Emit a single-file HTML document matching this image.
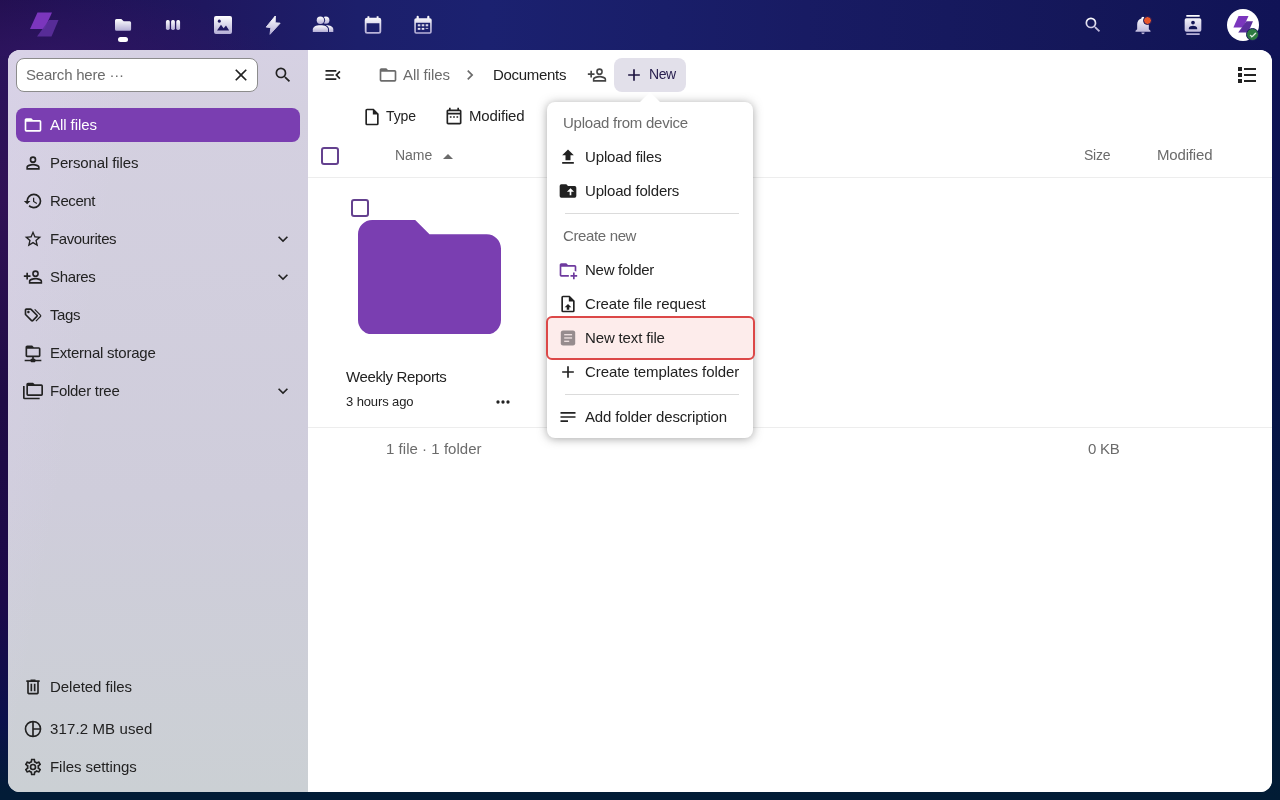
<!DOCTYPE html>
<html lang="en">
<head>
<meta charset="utf-8">
<title>Documents - Files</title>
<style>
*{box-sizing:border-box;margin:0;padding:0}
html,body{width:1280px;height:800px;overflow:hidden}
body{font-family:"Liberation Sans",sans-serif;font-size:15px;color:#222;position:relative;
background:
 radial-gradient(ellipse 240px 70px at 50px 62px, rgba(50,22,100,.85), rgba(50,22,100,0) 100%) 0 0 / 400px 56px no-repeat,
 linear-gradient(to right,#220f50 0,#211156 5%,#1f175f 16%,#1c1f6b 28%,#1b2170 38%,#191e69 52%,#181b63 63%,#141759 85%,#101356 100%) 0 0 / 1280px 56px no-repeat,
 linear-gradient(to bottom,#220f50 0,#2b145c 6%,#301155 25%,#1f0c45 50%,#1c0949 75%,#0b104b 90%,#021c37 99%) 0 0 / 24px 800px no-repeat,
 linear-gradient(to bottom,#101356 0,#09124e 38%,#01193c 75%,#021c35 100%) 1256px 0 / 24px 800px no-repeat,
 #021c36;}
.abs{position:absolute}
svg{display:block;position:absolute}
.t{position:absolute;white-space:nowrap;line-height:20px}
#content,#menu{will-change:transform}
/* header */
#header{position:absolute;left:0;top:0;width:1280px;height:50px}
#header svg.hi{width:20px;height:20px;fill:url(#hg)}
/* content */
#content{position:absolute;left:8px;top:50px;width:1264px;height:742px;border-radius:12px;overflow:hidden;background:#fff}
#nav{position:absolute;left:0;top:0;width:300px;height:742px;
 background:linear-gradient(100deg,rgba(222,212,240,.35) 0,rgba(222,212,240,0) 30%),linear-gradient(to bottom,#d6d1e3 0%,#d4d0e0 8%,#cfcddb 60%,#cbd0d4 100%)}
#main{position:absolute;left:300px;top:0;width:964px;height:742px;background:#fff}
.navi{position:absolute;left:8px;width:284px;height:34px;border-radius:8px}
.navi.active{background:#7a3eb1}
.navi .t{left:34px;top:7px;color:#222}
.navi.active .t{color:#fff}
.navi svg{left:7px;top:7px;width:20px;height:20px;fill:#222}
.navi.active svg{fill:#fff}
.navi svg.chev{left:257px;top:7px;width:20px;height:20px}
.line{position:absolute;height:1px;background:#ededed}
.cb{width:18px;height:18px;border:2px solid #64418f;border-radius:3px;background:#fff}
/* popup */
#menu{position:absolute;left:547px;top:102px;width:206px;height:336px;background:#fff;border-radius:8px;
 box-shadow:0 1px 10px rgba(77,77,77,.5)}
#menu .t{left:38px;color:#222}
#menu .cap{left:16px;color:#6b6b6b}
#menu svg{left:11px;width:20px;height:20px;fill:#222}
#menu .sep{position:absolute;left:18px;width:174px;height:1px;background:#dbdbdb}
</style>
</head>
<body>
<svg width="0" height="0" style="position:absolute"><defs><linearGradient id="hg" x1="0" y1="0" x2="0" y2="1"><stop offset="0" stop-color="#ffffff"/><stop offset="1" stop-color="#b4aed6"/></linearGradient></defs></svg>
<div id="header">
 <svg style="left:28px;top:10px;width:32px;height:28px" viewBox="28 10 32 28">
  <polygon points="37.5,12.5 52,12.5 44.5,29 30,29" fill="#7b36bd"/>
  <polygon points="49,20 58.5,20 51.5,36.5 37,36.5" fill="#5b2f9c" opacity=".92"/>
 </svg>
 <!-- files -->
 <svg class="hi" style="left:113px;top:15px" viewBox="113 15 20 20"><path d="M116.500,19H121.300L123.700,21.300H129.600A1.500,1.500 0 0,1 131.100,22.800V29.200A1.500,1.500 0 0,1 129.600,30.700H116.500A1.500,1.500 0 0,1 115,29.200V20.500A1.500,1.500 0 0,1 116.500,19Z"/></svg>
 <div class="abs" style="left:118px;top:37px;width:10px;height:5px;border-radius:2.5px;background:#fff"></div>
 <!-- deck -->
 <svg class="hi" style="left:163px;top:15px" viewBox="0 0 24 24"><rect x="3.5" y="6" width="4.6" height="12" rx="2"/><rect x="9.7" y="6" width="4.6" height="12" rx="2"/><rect x="15.9" y="6" width="4.6" height="12" rx="2"/></svg>
 <!-- photos -->
 <svg class="hi" style="left:214px;top:16px;width:18px;height:18px" viewBox="3 3 18 18"><path fill-rule="evenodd" d="M5,3H19A2,2 0 0,1 21,5V19A2,2 0 0,1 19,21H5A2,2 0 0,1 3,19V5A2,2 0 0,1 5,3ZM8.3,6.6A1.6,1.6 0 1,0 8.31,6.6ZM6,17.5L10,11.8L12.6,15.3L15,12.6L18.2,17.5Z"/></svg>
 <!-- activity -->
 <svg class="hi" style="left:263px;top:13px;width:20px;height:24px" viewBox="263 13 20 24"><path d="M275.300,16L266.200,27.100L270.900,27.600L270,34.300L280.100,23.200L275.200,22.800Z" stroke="url(#hg)" stroke-width="1" stroke-linejoin="round"/></svg>
 <!-- contacts -->
 <svg class="hi" style="left:310px;top:12px;width:26px;height:24px" viewBox="310 12 26 24"><defs><mask id="pm" maskUnits="userSpaceOnUse" x="310" y="12" width="26" height="24"><rect x="310" y="12" width="26" height="24" fill="#fff"/><circle cx="320.400" cy="20.200" r="4.700" fill="#000"/><path d="M311.800,33V29.500C311.800,26 315.500,24.200 320.400,24.200C325.300,24.200 329,26 329,29.500V33Z" fill="#000"/></mask></defs><circle cx="320.400" cy="20.200" r="3.700"/><path d="M312.800,32V29.500C312.800,26.600 316,25.200 320.400,25.200C324.800,25.200 328,26.600 328,29.500V32Z"/><g mask="url(#pm)"><circle cx="325.800" cy="20.200" r="3.600"/><path d="M326,32V25.300C330.300,25.300 333.300,26.700 333.300,29.500V32Z"/></g></svg>
 <!-- calendar -->
 <svg class="hi" style="left:362px;top:13.800px;width:22px;height:22px" viewBox="0 0 24 24"><path fill-rule="evenodd" d="M6,2.5H8V4H16V2.5H18V4H18.5A2.5,2.5 0 0,1 21,6.5V19A2.5,2.5 0 0,1 18.500,21.500H5.5A2.500,2.500 0 0,1 3,19V6.5A2.500,2.500 0 0,1 5.500,4H6ZM5,10V19A.5,.5 0 0,0 5.5,19.5H18.5A.5,.5 0 0,0 19,19V10Z"/></svg>
 <!-- calendar 2 -->
 <svg class="hi" style="left:412px;top:13.800px;width:22px;height:22px" viewBox="0 0 24 24"><path fill-rule="evenodd" d="M6.2,2A1.2,1.200 0 0,1 7.400,3.200V4.5H16.600V3.200A1.200,1.200 0 0,1 19,3.200V4.500H19.500A2,2 0 0,1 21.500,6.500V19.500A2,2 0 0,1 19.500,21.500H4.500A2,2 0 0,1 2.500,19.500V6.500A2,2 0 0,1 4.500,4.500H5V3.200A1.200,1.200 0 0,1 6.200,2ZM4.200,9.500V19.300A.5,.5 0 0,0 4.700,19.800H19.300A.5,.5 0 0,0 19.800,19.300V9.500Z"/><g><rect x="6.300" y="11.300" width="2.800" height="2.200"/><rect x="10.600" y="11.300" width="2.800" height="2.200"/><rect x="14.900" y="11.300" width="2.800" height="2.200"/><rect x="6.300" y="15.200" width="2.800" height="2.200"/><rect x="10.600" y="15.200" width="2.800" height="2.200"/><rect x="14.900" y="15.200" width="2.800" height="1"/></g></svg>
 <!-- right -->
 <svg class="hi" style="left:1083px;top:15px;width:20px;height:20px" viewBox="0 0 24 24"><path d="M9.5,3A6.5,6.5 0 0,1 16,9.5C16,11.110 15.410,12.590 14.440,13.730L14.710,14H15.500L20.500,19L19,20.500L14,15.500V14.710L13.730,14.440C12.590,15.410 11.110,16 9.500,16A6.500,6.500 0 0,1 3,9.500A6.500,6.500 0 0,1 9.500,3M9.500,5C7,5 5,7 5,9.500C5,12 7,14 9.500,14C12,14 14,12 14,9.500C14,7 12,5 9.500,5Z"/></svg>
 <svg class="hi" style="left:1133px;top:15px;width:20px;height:20px" viewBox="0 0 24 24"><path d="M21,19V20H3V19L5,17V11C5,7.900 7.030,5.170 10,4.290C10,4.190 10,4.100 10,4A2,2 0 0,1 12,2A2,2 0 0,1 14,4C14,4.100 14,4.190 14,4.290C16.970,5.170 19,7.900 19,11V17L21,19M14,21A2,2 0 0,1 12,23A2,2 0 0,1 10,21"/></svg>
 <div class="abs" style="left:1142.800px;top:15.800px;width:9.400px;height:9.400px;border-radius:50%;background:#e9562a;border:1.500px solid #15155c"></div>
 <svg class="hi" style="left:1183px;top:15px;width:20px;height:20px" viewBox="0 0 24 24"><path d="M20,0H4V2H20V0M4,24H20V22H4V24M20,4H4A2,2 0 0,0 2,6V18A2,2 0 0,0 4,20H20A2,2 0 0,0 22,18V6A2,2 0 0,0 20,4M12,6.750A2.250,2.250 0 0,1 14.250,9A2.250,2.250 0 0,1 12,11.250A2.250,2.250 0 0,1 9.750,9A2.250,2.250 0 0,1 12,6.750M17,17H7V15.500C7,13.830 10.330,13 12,13C13.670,13 17,13.830 17,15.500V17Z"/></svg>
 <div class="abs" style="left:1227px;top:9px;width:32px;height:32px;border-radius:50%;background:#fff"></div>
 <svg style="left:1231.500px;top:14.200px;width:22px;height:20px" viewBox="28 10 32 28">
  <polygon points="37.5,12.5 52,12.5 44.5,29 30,29" fill="#7b36bd"/>
  <polygon points="49,20 58.5,20 51.5,36.5 37,36.5" fill="#5b2f9c"/>
 </svg>
 <div class="abs" style="left:1246px;top:28px;width:13px;height:13px;border-radius:50%;background:#2d7b41;border:1px solid #1a1a60"></div>
 <svg style="left:1248.5px;top:30.500px;width:8px;height:8px" viewBox="0 0 24 24"><path d="M21,7L9,19L3.500,13.500L4.910,12.090L9,16.170L19.590,5.590L21,7Z" fill="#fff" stroke="#fff" stroke-width="2"/></svg>
</div>
<div id="content">
 <div id="nav">
 <div class="abs" style="left:8px;top:8px;width:242px;height:34px;border-radius:8px;background:#fff;border:1px solid #8c8c8c"></div>
 <div class="t m" style="letter-spacing:-0.208px;;left:18px;top:15px;color:#6b6b6b">Search here ···</div>
 <svg style="left:223px;top:15px;width:20px;height:20px;fill:#222" viewBox="0 0 24 24"><path d="M19,6.410L17.590,5L12,10.590L6.410,5L5,6.410L10.590,12L5,17.590L6.410,19L12,13.410L17.590,19L19,17.590L13.410,12L19,6.410Z"/></svg>
 <svg style="left:265px;top:15px;width:20px;height:20px;fill:#222" viewBox="0 0 24 24"><path d="M9.500,3A6.500,6.500 0 0,1 16,9.500C16,11.110 15.410,12.590 14.440,13.730L14.710,14H15.500L20.500,19L19,20.500L14,15.500V14.710L13.730,14.440C12.590,15.410 11.110,16 9.500,16A6.500,6.500 0 0,1 3,9.500A6.500,6.500 0 0,1 9.500,3M9.500,5C7,5 5,7 5,9.500C5,12 7,14 9.500,14C12,14 14,12 14,9.500C14,7 12,5 9.500,5Z"/></svg>
 <div class="navi active" style="top:58px"><svg viewBox="0 0 24 24"><path d="M20,18H4V8H20M20,6H12L10,4H4C2.890,4 2,4.890 2,6V18A2,2 0 0,0 4,20H20A2,2 0 0,0 22,18V8C22,6.890 21.100,6 20,6Z"/></svg><div class="t m" style="letter-spacing:-0.057px;">All files</div></div>
 <div class="navi" style="top:96px"><svg viewBox="0 0 24 24"><path d="M12,4A4,4 0 0,1 16,8A4,4 0 0,1 12,12A4,4 0 0,1 8,8A4,4 0 0,1 12,4M12,6A2,2 0 0,0 10,8A2,2 0 0,0 12,10A2,2 0 0,0 14,8A2,2 0 0,0 12,6M12,13C14.670,13 20,14.330 20,17V20H4V17C4,14.330 9.330,13 12,13M12,14.900C9.030,14.900 5.900,16.360 5.900,17V18.100H18.100V17C18.100,16.360 14.970,14.900 12,14.900Z"/></svg><div class="t m" style="letter-spacing:-0.128px;">Personal files</div></div>
 <div class="navi" style="top:134px"><svg viewBox="0 0 24 24"><path d="M13.500,8H12V13L16.280,15.540L17,14.330L13.500,12.250V8M13,3A9,9 0 0,0 4,12H1L4.960,16.030L9,12H6A7,7 0 0,1 13,5A7,7 0 0,1 20,12A7,7 0 0,1 13,19C11.070,19 9.320,18.210 8.060,16.940L6.640,18.360C8.270,20 10.500,21 13,21A9,9 0 0,0 22,12A9,9 0 0,0 13,3"/></svg><div class="t m" style="letter-spacing:-0.422px;">Recent</div></div>
 <div class="navi" style="top:172px"><svg viewBox="0 0 24 24"><path d="M12,15.390L8.240,17.660L9.230,13.380L5.910,10.500L10.290,10.130L12,6.090L13.710,10.130L18.090,10.500L14.770,13.380L15.760,17.660M22,9.240L14.810,8.630L12,2L9.190,8.630L2,9.240L7.450,13.970L5.820,21L12,17.270L18.180,21L16.540,13.970L22,9.240Z"/></svg><div class="t m" style="letter-spacing:-0.378px;">Favourites</div><svg class="chev" viewBox="0 0 24 24"><path d="M7.410,8.580L12,13.170L16.590,8.580L18,10L12,16L6,10L7.410,8.580Z"/></svg></div>
 <div class="navi" style="top:210px"><svg viewBox="0 0 24 24"><path d="M15,4A4,4 0 0,0 11,8A4,4 0 0,0 15,12A4,4 0 0,0 19,8A4,4 0 0,0 15,4M15,5.900C16.160,5.900 17.100,6.840 17.100,8C17.100,9.160 16.160,10.100 15,10.100A2.100,2.100 0 0,1 12.900,8A2.100,2.100 0 0,1 15,5.900M4,7V10H1V12H4V15H6V12H9V10H6V7H4M15,13C12.330,13 7,14.330 7,17V20H23V17C23,14.330 17.670,13 15,13M15,14.900C17.970,14.900 21.100,16.360 21.100,17V18.100H8.900V17C8.900,16.360 12,14.900 15,14.900Z"/></svg><div class="t m" style="letter-spacing:-0.339px;">Shares</div><svg class="chev" viewBox="0 0 24 24"><path d="M7.410,8.580L12,13.170L16.590,8.580L18,10L12,16L6,10L7.410,8.580Z"/></svg></div>
 <div class="navi" style="top:248px"><svg viewBox="0 0 24 24"><path d="M6.500 10C7.300 10 8 9.300 8 8.500S7.300 7 6.500 7 5 7.700 5 8.500 5.700 10 6.500 10M9 6L16 13L11 18L4 11V6H9M9 4H4C2.900 4 2 4.900 2 6V11C2 11.600 2.200 12.100 2.600 12.400L9.600 19.400C9.900 19.800 10.400 20 11 20S12.100 19.800 12.400 19.400L17.400 14.400C17.800 14 18 13.500 18 13C18 12.400 17.800 11.900 17.400 11.600L10.400 4.600C10.100 4.200 9.600 4 9 4M13.500 5.700L14.500 4.700L21.400 11.600C21.800 12 22 12.500 22 13S21.800 14.100 21.400 14.400L16 19.800L15 18.800L20.700 13L13.500 5.700Z"/></svg><div class="t m" style="letter-spacing:-0.422px;">Tags</div></div>
 <div class="navi" style="top:286px"><svg viewBox="0 0 24 24"><path d="M15 20C15 19.450 14.550 19 14 19H13V17H19C20.110 17 21 16.110 21 15V7C21 5.900 20.110 5 19 5H13L11 3H5C3.900 3 3 3.900 3 5V15C3 16.110 3.900 17 5 17H11V19H10C9.450 19 9 19.450 9 20H2V22H9C9 22.550 9.450 23 10 23H14C14.550 23 15 22.550 15 22H22V20H15M5 15V7H19V15H5Z"/></svg><div class="t m" style="letter-spacing:-0.233px;">External storage</div></div>
 <div class="navi" style="top:324px"><svg viewBox="0 0 24 24"><path d="M22,4A2,2 0 0,1 24,6V16A2,2 0 0,1 22,18H6A2,2 0 0,1 4,16V4A2,2 0 0,1 6,2H12L14,4H22M2,6V20H20V22H2A2,2 0 0,1 0,20V11H0V6H2M6,6V16H22V6H6Z"/></svg><div class="t m" style="letter-spacing:-0.277px;">Folder tree</div><svg class="chev" viewBox="0 0 24 24"><path d="M7.410,8.580L12,13.170L16.590,8.580L18,10L12,16L6,10L7.410,8.580Z"/></svg></div>
 <div class="navi" style="top:620px"><svg viewBox="0 0 24 24"><path d="M9,3V4H4V6H5V19A2,2 0 0,0 7,21H17A2,2 0 0,0 19,19V6H20V4H15V3H9M7,6H17V19H7V6M9,8V17H11V8H9M13,8V17H15V8H13Z"/></svg><div class="t m" style="letter-spacing:-0.042px;">Deleted files</div></div>
 <div class="navi" style="top:662px"><svg viewBox="0 0 24 24"><path d="M12,2A10,10 0 1,0 12,22A10,10 0 1,0 12,2ZM11,4.060V19.940A8,8 0 0,1 11,4.060ZM13,4.060A8,8 0 0,1 19.940,11H13ZM13,13H19.940A8,8 0 0,1 13,19.940Z"/></svg><div class="t m" style="letter-spacing:0.123px;">317.2 MB used</div></div>
 <div class="navi" style="top:700px"><svg viewBox="0 0 24 24"><path d="M12,8A4,4 0 0,1 16,12A4,4 0 0,1 12,16A4,4 0 0,1 8,12A4,4 0 0,1 12,8M12,10A2,2 0 0,0 10,12A2,2 0 0,0 12,14A2,2 0 0,0 14,12A2,2 0 0,0 12,10M10,22C9.750,22 9.540,21.820 9.500,21.580L9.130,18.930C8.500,18.680 7.960,18.340 7.440,17.940L4.950,18.950C4.730,19.030 4.460,18.950 4.340,18.730L2.340,15.270C2.210,15.050 2.270,14.780 2.460,14.630L4.570,12.970L4.500,12L4.570,11L2.460,9.370C2.270,9.220 2.210,8.950 2.340,8.730L4.340,5.270C4.460,5.050 4.730,4.960 4.950,5.050L7.440,6.050C7.960,5.660 8.500,5.320 9.130,5.070L9.500,2.420C9.540,2.180 9.750,2 10,2H14C14.250,2 14.460,2.180 14.500,2.420L14.870,5.070C15.500,5.320 16.040,5.660 16.560,6.050L19.050,5.050C19.270,4.960 19.540,5.050 19.660,5.270L21.660,8.730C21.790,8.950 21.730,9.220 21.540,9.370L19.430,11L19.500,12L19.430,13L21.540,14.630C21.730,14.780 21.790,15.050 21.660,15.270L19.660,18.730C19.540,18.950 19.270,19.040 19.050,18.950L16.560,17.950C16.040,18.340 15.500,18.680 14.870,18.930L14.500,21.580C14.460,21.820 14.250,22 14,22H10M11.250,4L10.880,6.610C9.680,6.860 8.620,7.500 7.850,8.390L5.440,7.350L4.690,8.650L6.800,10.200C6.400,11.370 6.400,12.640 6.800,13.800L4.680,15.360L5.430,16.660L7.860,15.620C8.630,16.500 9.680,17.140 10.870,17.380L11.240,20H12.760L13.130,17.390C14.320,17.140 15.370,16.500 16.140,15.620L18.570,16.660L19.320,15.360L17.200,13.810C17.600,12.640 17.600,11.370 17.200,10.200L19.310,8.650L18.560,7.350L16.150,8.390C15.380,7.500 14.320,6.860 13.120,6.620L12.750,4H11.250Z"/></svg><div class="t m" style="letter-spacing:-0.057px;">Files settings</div></div>
</div>
 <div id="main">
 <svg style="left:15px;top:15px;width:20px;height:20px;fill:#222" viewBox="0 0 24 24"><path d="M21,15.610L19.590,17L14.580,12L19.590,7L21,8.390L17.440,12L21,15.610M3,6H16V8H3V6M3,13V11H13V13H3M3,18V16H16V18H3Z"/></svg>
 <svg style="left:70px;top:15px;width:20px;height:20px;fill:#6b6b6b" viewBox="0 0 24 24"><path d="M20,18H4V8H20M20,6H12L10,4H4C2.890,4 2,4.890 2,6V18A2,2 0 0,0 4,20H20A2,2 0 0,0 22,18V8C22,6.890 21.100,6 20,6Z"/></svg>
 <div class="t m" style="letter-spacing:-0.068px;;left:95px;top:15px;color:#6b6b6b">All files</div>
 <svg style="left:152px;top:15px;width:20px;height:20px;fill:#6b6b6b" viewBox="0 0 24 24"><path d="M8.590,16.580L13.170,12L8.590,7.410L10,6L16,12L10,18L8.590,16.580Z"/></svg>
 <div class="t m" style="letter-spacing:-0.308px;;left:185px;top:15px;color:#222">Documents</div>
 <svg style="left:279px;top:15px;width:20px;height:20px;fill:#444" viewBox="0 0 24 24"><path d="M15,4A4,4 0 0,0 11,8A4,4 0 0,0 15,12A4,4 0 0,0 19,8A4,4 0 0,0 15,4M15,5.900C16.160,5.900 17.100,6.840 17.100,8C17.100,9.160 16.160,10.100 15,10.100A2.100,2.100 0 0,1 12.900,8A2.100,2.100 0 0,1 15,5.900M4,7V10H1V12H4V15H6V12H9V10H6V7H4M15,13C12.330,13 7,14.330 7,17V20H23V17C23,14.330 17.670,13 15,13M15,14.900C17.970,14.900 21.100,16.360 21.100,17V18.100H8.900V17C8.900,16.360 12,14.900 15,14.900Z"/></svg>
 <div class="abs" style="left:306px;top:8px;width:72px;height:34px;border-radius:8px;background:#e2e0ea"></div>
 <svg style="left:316px;top:15px;width:20px;height:20px;fill:#1e1440" viewBox="0 0 24 24"><path d="M19,13H13V19H11V13H5V11H11V5H13V11H19V13Z"/></svg>
 <div class="t m" style="letter-spacing:-0.472px;;left:341px;top:14px;color:#2a2050;font-size:14px">New</div>
 <svg style="left:927px;top:13px;width:24px;height:24px;fill:#222" viewBox="0 0 24 24"><path d="M3,4H7V8H3V4M9,5V7H21V5H9M3,10H7V14H3V10M9,11V13H21V11H9M3,16H7V20H3V16M9,17V19H21V17H9"/></svg>
 <svg style="left:54px;top:57px;width:20px;height:20px;fill:#222" viewBox="0 0 24 24"><path d="M14,2H6A2,2 0 0,0 4,4V20A2,2 0 0,0 6,22H18A2,2 0 0,0 20,20V8L14,2M18,20H6V4H13V9H18V20Z"/></svg>
 <div class="t m" style="letter-spacing:-0.090px;;left:78px;top:56px;color:#222;font-size:14px">Type</div>
 <svg style="left:136px;top:57px;width:20px;height:20px;fill:#222" viewBox="0 0 24 24"><path d="M7 11H9V13H7V11M21 5V19C21 20.110 20.110 21 19 21H5C3.890 21 3 20.100 3 19V5C3 3.900 3.900 3 5 3H6V1H8V3H16V1H18V3H19C20.110 3 21 3.900 21 5M5 7H19V5H5V7M19 19V9H5V19H19M15 13V11H17V13H15M11 13V11H13V13H11Z"/></svg>
 <div class="t m" style="letter-spacing:-0.150px;;left:161px;top:56px;color:#222">Modified</div>
 <div class="abs cb" style="left:13px;top:97px"></div>
 <div class="t m" style="letter-spacing:-0.040px;;left:87px;top:95px;color:#6b6b6b;font-size:14px">Name</div>
 <svg style="left:128px;top:94px;width:24px;height:24px;fill:#6b6b6b" viewBox="0 0 24 24"><path d="M7,15L12,10L17,15H7Z"/></svg>
 <div class="t m" style="letter-spacing:-0.234px;;left:776px;top:95px;color:#6b6b6b;font-size:14px">Size</div>
 <div class="t m" style="letter-spacing:-0.163px;;left:849px;top:95px;color:#6b6b6b">Modified</div>
 <div class="line" style="left:0;top:127px;width:964px"></div>
 <div class="abs cb" style="left:43.400px;top:149.400px"></div>
 <svg style="left:49.500px;top:170px;width:143px;height:114.400px" viewBox="2 4 20 16"><path d="M10,4H4C2.890,4 2,4.890 2,6V18A2,2 0 0,0 4,20H20A2,2 0 0,0 22,18V8C22,6.890 21.100,6 20,6H12L10,4Z" fill="#7a3eb1"/></svg>
 <div class="t m" style="letter-spacing:-0.364px;;left:38px;top:317px;color:#222">Weekly Reports</div>
 <div class="t m" style="letter-spacing:-0.107px;;left:38px;top:342px;color:#222;font-size:13px">3 hours ago</div>
 <svg style="left:185px;top:342px;width:20px;height:20px;fill:#222" viewBox="0 0 24 24"><path d="M16,12A2,2 0 0,1 18,10A2,2 0 0,1 20,12A2,2 0 0,1 18,14A2,2 0 0,1 16,12M10,12A2,2 0 0,1 12,10A2,2 0 0,1 14,12A2,2 0 0,1 12,14A2,2 0 0,1 10,12M4,12A2,2 0 0,1 6,10A2,2 0 0,1 8,12A2,2 0 0,1 6,14A2,2 0 0,1 4,12Z"/></svg>
 <div class="line" style="left:0;top:377px;width:964px"></div>
 <div class="t m" style="letter-spacing:0.033px;;left:78px;top:389px;color:#6b6b6b">1 file · 1 folder</div>
 <div class="t m" style="letter-spacing:-0.258px;;left:780px;top:389px;color:#6b6b6b">0 KB</div>
</div>
</div>
<div id="menu">
 <div class="abs" style="left:93px;top:-10px;width:0;height:0;border-left:10px solid transparent;border-right:10px solid transparent;border-bottom:10px solid #fff"></div>
 <div class="t m cap" style="letter-spacing:-0.241px;;top:11px">Upload from device</div>
 <svg style="top:45px;fill:#222" viewBox="0 0 24 24"><path d="M9,16V10H5L12,3L19,10H15V16H9M5,20V18H19V20H5Z"/></svg><div class="t m" style="letter-spacing:-0.149px;;top:45px">Upload files</div>
 <svg style="top:79px;fill:#222" viewBox="0 0 24 24"><path d="M20,6A2,2 0 0,1 22,8V18A2,2 0 0,1 20,20H4A2,2 0 0,1 2,18V6A2,2 0 0,1 4,4H10L12,6H20M10.750,13H14V17H16V13H19.250L15,8.750"/></svg><div class="t m" style="letter-spacing:-0.181px;;top:79px">Upload folders</div>
 <div class="sep" style="top:111px"></div>
 <div class="t m cap" style="letter-spacing:-0.362px;;top:124px">Create new</div>
 <svg style="top:158px;fill:#6e3a9e" viewBox="0 0 24 24"><path d="M13 19C13 19.340 13.040 19.670 13.090 20H4C2.900 20 2 19.110 2 18V6C2 4.890 2.890 4 4 4H10L12 6H20C21.100 6 22 6.890 22 8V13.810C21.390 13.460 20.720 13.220 20 13.090V8H4V18H13.090C13.040 18.330 13 18.660 13 19M20 18V15H18V18H15V20H18V23H20V20H23V18H20Z"/></svg><div class="t m" style="letter-spacing:-0.270px;;top:158px">New folder</div>
 <svg style="top:192px;fill:#222" viewBox="0 0 24 24"><path d="M14,2L20,8V20A2,2 0 0,1 18,22H6A2,2 0 0,1 4,20V4A2,2 0 0,1 6,2H14M18,20V9H13V4H6V20H18M12,12L16,16H13.500V19H10.500V16H8L12,12Z"/></svg><div class="t m" style="letter-spacing:-0.104px;;top:192px">Create file request</div>
 <div class="abs" style="left:-1.500px;top:213.500px;width:209px;height:44.500px;border:2.600px solid #dc4848;border-radius:6px;background:#fdeceb"></div>
 <svg style="left:13px;top:228px;width:16px;height:16px" viewBox="0 0 16 16"><rect x=".8" y=".4" width="14.400" height="15" rx="2.200" fill="#968c8e"/><rect x="4.200" y="4.100" width="7.900" height="1.250" fill="#f6e8e8"/><rect x="4.200" y="7.350" width="7.900" height="1.250" fill="#f6e8e8"/><rect x="4.200" y="10.650" width="5" height="1.250" fill="#f6e8e8"/></svg><div class="t m" style="letter-spacing:-0.146px;;top:226px">New text file</div>
 <svg style="top:260px;fill:#222" viewBox="0 0 24 24"><path d="M19,13H13V19H11V13H5V11H11V5H13V11H19V13Z"/></svg><div class="t m" style="letter-spacing:-0.075px;;top:260px">Create templates folder</div>
 <div class="sep" style="top:292px"></div>
 <svg style="top:305px;fill:#222" viewBox="0 0 24 24"><path d="M21,6V8H3V6H21M3,18H12V16H3V18M3,13H21V11H3V13Z"/></svg><div class="t m" style="letter-spacing:-0.141px;;top:305px">Add folder description</div>
</div>
</body>
</html>
